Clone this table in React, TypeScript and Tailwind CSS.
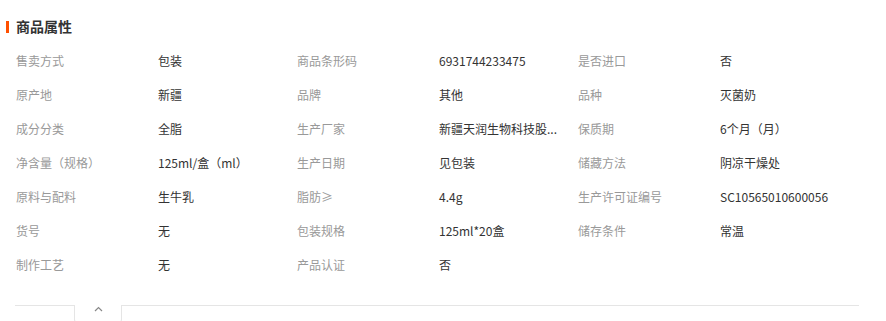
import React from "react";

const rows: [string, string][][] = [
  [["售卖方式", "包装"], ["商品条形码", "6931744233475"], ["是否进口", "否"]],
  [["原产地", "新疆"], ["品牌", "其他"], ["品种", "灭菌奶"]],
  [["成分分类", "全脂"], ["生产厂家", "新疆天润生物科技股..."], ["保质期", "6个月（月）"]],
  [["净含量（规格）", "125ml/盒（ml）"], ["生产日期", "见包装"], ["储藏方法", "阴凉干燥处"]],
  [["原料与配料", "生牛乳"], ["脂肪≥", "4.4g"], ["生产许可证编号", "SC10565010600056"]],
  [["货号", "无"], ["包装规格", "125ml*20盒"], ["储存条件", "常温"]],
  [["制作工艺", "无"], ["产品认证", "否"]],
];

export default function App() {
  return (
    <div
      className="w-[886px] h-[321px] overflow-hidden bg-white"
      style={{ fontFamily: '"Noto Sans CJK SC", "Noto Sans", sans-serif' }}
    >
      <div className="flex items-center h-[24px] mt-[14px] pl-[6px]">
        <div className="w-[3px] h-[12px] bg-[#ff5000] mt-[1px]" />
        <div className="ml-[7px] text-[14px] font-bold text-[#333] leading-[24px]">商品属性</div>
      </div>
      <div className="pl-[16px] mt-[6px]">
        {rows.map((row, i) => (
          <div key={i} className="flex h-[34px] items-center text-[12px]">
            {row.map(([k, v], j) => (
              <div key={j} className="flex w-[281px] shrink-0">
                <div className="w-[142px] shrink-0 text-[#999]">{k}</div>
                <div className="w-[130px] whitespace-nowrap text-[#333]">{v}</div>
              </div>
            ))}
          </div>
        ))}
      </div>
      <div className="ml-[15px] w-[844px] mt-[23px] border-t border-[#e5e5e5]">
        <div className="ml-[59px] -mt-px w-[48px] h-[18px] bg-white border border-t-0 border-[#e5e5e5] rounded-b-[4px] flex justify-center pt-[1px]">
          <svg width="9" height="6" viewBox="0 0 9 6" fill="none">
            <path d="M1 5L4.5 1.5L8 5" stroke="#888" strokeWidth="1.2" />
          </svg>
        </div>
      </div>
    </div>
  );
}
